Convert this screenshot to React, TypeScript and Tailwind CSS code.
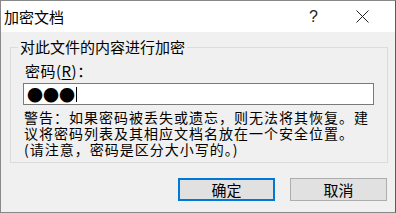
import React from 'react';

const warning = [
  '警告：如果密码被丢失或遗忘，则无法将其恢复。建',
  '议将密码列表及其相应文档名放在一个安全位置。',
  '(请注意，密码是区分大小写的。)',
];

export default function App() {
  return (
    <div className="w-[396px] h-[213px] bg-[#f0f0f0] border border-[#888888] border-r-[#5a5a5a] flex flex-col text-black font-['Noto_Sans_CJK_SC',sans-serif] text-[15px] leading-[16px] overflow-hidden">
      {/* title bar */}
      <div className="h-[31px] bg-white flex items-center shrink-0">
        <span className="pl-[3px] pt-[1px]">加密文档</span>
        <span className="ml-auto mr-[38px] text-[16px] text-[#222] font-['Liberation_Sans',sans-serif]">?</span>
        <svg width="13" height="13" viewBox="0 0 13 13" className="mr-[26px]">
          <path d="M0.5 0.5 L12.5 12.5 M12.5 0.5 L0.5 12.5" stroke="#222" strokeWidth="1" fill="none" />
        </svg>
      </div>

      {/* group box */}
      <fieldset className="ml-[9px] mt-[7px] w-[377px] h-[124px] border border-[#dcdcdc] px-[13px] pb-0">
        <legend className="ml-[-6px] px-[2px]">对此文件的内容进行加密</legend>
        <div className="mt-[8px] pl-[1px] tracking-[0.5px]">
          密码(<span className="underline underline-offset-2">R</span>)：
        </div>
        <div className="mt-[4px] ml-[-1px] w-[351px] h-[22px] bg-white border border-[#7a7a7a] flex items-center pl-[3px]">
          <span className="text-[16px] leading-[18px]">●●●</span>
          <span className="w-px h-[15px] bg-black ml-[1px]" />
        </div>
        <div className="mt-[4px] text-[14px] leading-[16px] tracking-[1px] whitespace-nowrap">
          {warning.map((line) => (
            <div key={line}>{line}</div>
          ))}
        </div>
      </fieldset>

      {/* buttons */}
      <div className="flex justify-end gap-[15px] mt-[15px] pr-[8px]">
        <button className="w-[97px] h-[23px] bg-[#e1e1e1] border-2 border-[#0078d7] flex items-center justify-center">
          确定
        </button>
        <button className="w-[97px] h-[23px] bg-[#e1e1e1] border border-[#adadad] flex items-center justify-center">
          取消
        </button>
      </div>
    </div>
  );
}
